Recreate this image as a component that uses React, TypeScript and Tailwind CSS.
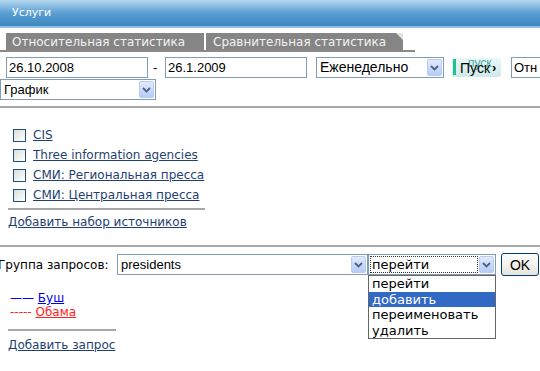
import React from "react";

const Arrow = () => (
  <span className="flex h-[17px] w-[15px] shrink-0 items-center justify-center rounded-[2px] border border-[#b8cbf2] bg-gradient-to-b from-[#e2eafd] to-[#b6cbf7]">
    <svg width="9" height="6" viewBox="0 0 9 6">
      <path d="M1 1 L4.5 4.5 L8 1" stroke="#4d6185" strokeWidth="1.8" fill="none" />
    </svg>
  </span>
);

const Select = ({ text, w, focus }: { text: string; w: string; focus?: boolean }) => (
  <div className={`flex h-[21px] shrink-0 items-center justify-between border border-[#7f9db9] bg-white pl-[2px] pr-[1px] ${w}`}>
    <span className={`leading-[15px] px-[1px] ${focus ? "outline outline-1 outline-dotted outline-[#333]" : ""} flex-1 mr-[2px] whitespace-nowrap`}>{text}</span>
    <Arrow />
  </div>
);

const Check = () => (
  <span className="inline-block h-[13px] w-[13px] shrink-0 border border-[#1c5180] bg-gradient-to-br from-[#dcdcd7] to-[#ffffff]" />
);

export default function App() {
  const f = { fontFamily: '"DejaVu Sans", Verdana, sans-serif' };
  const a = { fontFamily: '"Liberation Sans", Arial, sans-serif' };
  return (
    <div className="relative h-[371px] w-[540px] overflow-hidden bg-white text-[12px] leading-[14px] text-black" style={f}>
      <div className="flex h-[28px] items-center border-b-2 border-[#8fc0e2] bg-gradient-to-b from-[#b4d8ef] via-[#5a9fd3] to-[#3d86bf] pl-[12px] text-[11px] text-white">
        Услуги
      </div>
      <div className="mt-[5px] flex h-[17px] w-[415px] items-end">
        <div className="ml-[6px] flex h-[17px] w-[198px] shrink-0 items-center bg-[#858585] pl-[6px] text-[12px] text-[#f2f2f2]">
          Относительная статистика
        </div>
        <div className="h-[17px] w-[2px] shrink-0 bg-white" />
        <div className="relative flex h-[17px] w-[197px] shrink-0 items-center bg-[#858585] pl-[7px] text-[12px] text-[#f2f2f2]">
          Сравнительная статистика
          <span className="absolute right-0 top-0 h-0 w-0 border-l-[7px] border-t-[7px] border-l-transparent border-t-[#e4e4dc]" />
        </div>
      </div>
      <div className="h-[2px] w-[415px] bg-[#8a8a8a]" />
      <div className="mt-[5px] flex items-center text-[13px]" style={a}>
        <div className="ml-[6px] flex h-[21px] w-[142px] shrink-0 items-center border border-[#7f9db9] pl-[2px]">26.10.2008</div>
        <span className="ml-[4px] w-[13px] shrink-0 pl-[1px]">-</span>
        <div className="flex h-[21px] w-[142px] shrink-0 items-center border border-[#7f9db9] pl-[2px]">26.1.2009</div>
        <div className="ml-[9px] shrink-0 text-[14px]">
          <Select text="Еженедельно" w="w-[128px]" />
        </div>
        <div className="relative ml-[8px] flex h-[19px] w-[49px] shrink-0 items-center rounded-[2px] bg-gradient-to-b from-[#eaf7f7] to-[#cfe9ea]">
          <span className="absolute left-[1px] top-[1px] h-[16px] w-[3px] bg-[#22c090]" />
          <span className="absolute left-[16px] top-[-2px] text-[12px] text-[#4aa8a8]">пуск</span>
          <span className="relative ml-[8px] text-[14px]">Пуск</span>
          <span className="relative ml-[2px] text-[13px] font-bold">›</span>
        </div>
        <div className="ml-[10px] flex h-[21px] w-[40px] shrink-0 items-center border border-[#7f9db9] pl-[2px]">Отн</div>
      </div>
      <div className="mt-[1px] text-[13px]" style={a}>
        <Select text="График" w="w-[156px]" />
      </div>
      <div className="mt-[6px] h-[2px] w-full bg-[#a8a8a8]" />
      <div className="ml-[13px] mt-[20px] flex flex-col gap-[6px] text-[12px]">
        {["CIS", "Three information agencies", "СМИ: Региональная пресса", "СМИ: Центральная пресса"].map((t) => (
          <div key={t} className="flex h-[14px] items-center">
            <Check />
            <span className="ml-[7px] whitespace-nowrap text-[#1f3f72] underline">{t}</span>
          </div>
        ))}
      </div>
      <div className="ml-[8px] mt-[6px] h-[2px] w-[197px] bg-[#a8a8a8]" />
      <div className="ml-[8px] mt-[5px] h-[14px] whitespace-nowrap text-[12px] text-[#1f3f72] underline">Добавить набор источников</div>
      <div className="mt-[16px] h-[2px] w-full bg-[#a8a8a8]" />
      <div className="mt-[6px] flex h-[23px] items-start">
        <span className="ml-[-2px] mt-[5px] w-[119px] shrink-0 whitespace-nowrap text-[12px]">Группа запросов:</span>
        <div className="mt-[1px] shrink-0 text-[13px]" style={a}>
          <Select text="presidents" w="w-[251px]" />
        </div>
        <div className="relative mt-[1px] shrink-0 text-[13px]" style={f}>
          <Select text="перейти" w="w-[128px]" focus />
          <div className="absolute left-0 top-[21px] w-[128px] border border-[#666] bg-white text-[13px] leading-[15.5px]">
            <div className="pl-[3px]">перейти</div>
            <div className="bg-[#316ac5] pl-[3px] text-white">добавить</div>
            <div className="pl-[3px]">переименовать</div>
            <div className="pl-[3px]">удалить</div>
          </div>
        </div>
        <div className="ml-[5px] flex h-[23px] w-[38px] shrink-0 items-center justify-center rounded-[3px] border border-[#003c74] bg-gradient-to-b from-white to-[#e6e4da] text-[14px]" style={a}>
          OK
        </div>
      </div>
      <div className="ml-[10px] mt-[15px] text-[12px] leading-[14px]">
        <div className="h-[14px]">
          <span className="text-[#0000ff]">——</span> <span className="text-[#0000ee] underline">Буш</span>
        </div>
        <div className="h-[14px]">
          <span className="text-[#ff2020]">-----</span> <span className="text-[#ff2020] underline">Обама</span>
        </div>
      </div>
      <div className="ml-[8px] mt-[10px] h-[2px] w-[108px] bg-[#a8a8a8]" />
      <div className="ml-[8px] mt-[7px] h-[14px] whitespace-nowrap text-[12px] text-[#1f3f72] underline">Добавить запрос</div>
    </div>
  );
}
